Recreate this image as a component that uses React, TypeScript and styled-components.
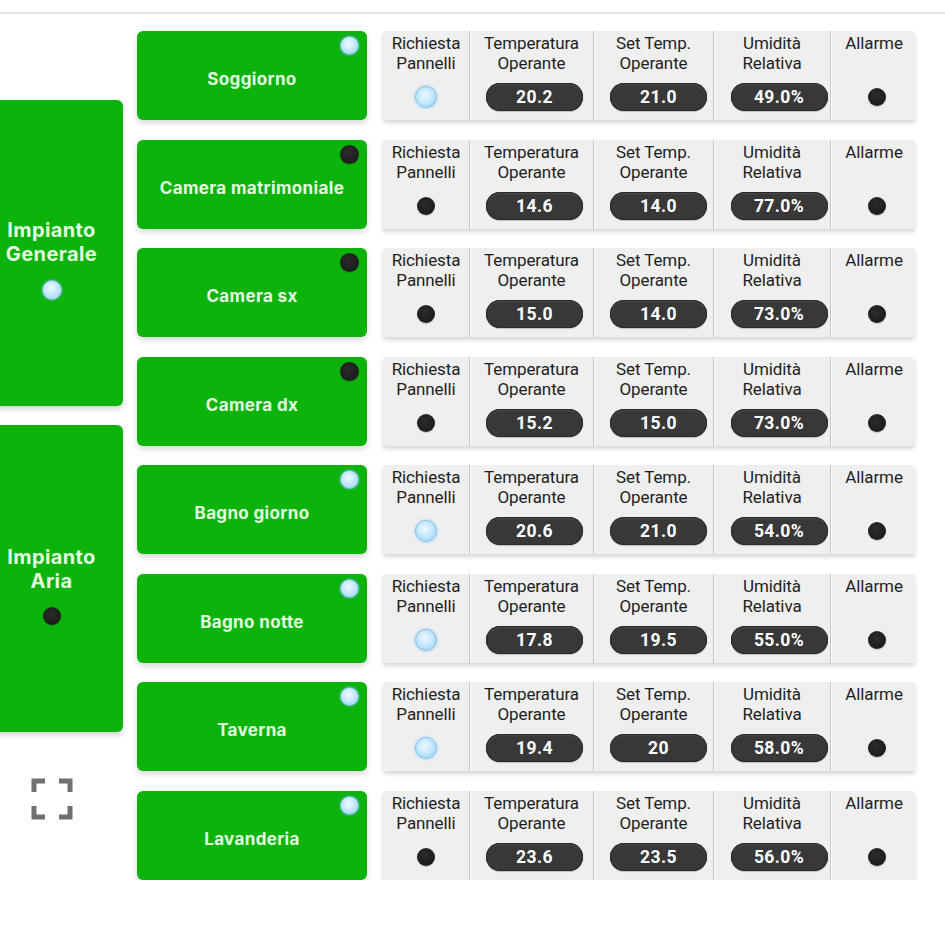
import React from "react";
import styled, { createGlobalStyle } from "styled-components";

const Global = createGlobalStyle`
  html, body { margin: 0; padding: 0; background: #ffffff; }
  body { font-family: Roboto, "Liberation Sans", sans-serif; overflow: hidden; }
`;

const TopBar = styled.div`
  height: 12px;
  border-bottom: 2px solid #e4e4e4;
`;

const Layout = styled.div`
  display: grid;
  grid-template-columns: 123px 230px 534px;
  column-gap: 14px;
  padding-top: 17px;
  & > :nth-child(3) { margin-left: 2px; }
`;

const LeftCol = styled.div`
  display: flex;
  flex-direction: column;
  align-items: stretch;
  padding-top: 69px;
  gap: 19px;
`;

const SystemPanel = styled.div<{ $h: number }>`
  height: ${(p) => p.$h}px;
  margin-left: -20px;
  background: #0bb30b;
  border-radius: 6px;
  box-shadow: 0 3px 5px rgba(0, 0, 0, 0.18);
  display: flex;
  flex-direction: column;
  align-items: center;
  justify-content: center;
  padding-top: 12px;
  box-sizing: border-box;
`;

const SystemTitle = styled.div`
  font-family: Inter, Roboto, "Liberation Sans", sans-serif;
  font-weight: 700;
  font-size: 20px;
  letter-spacing: 0.4px;
  line-height: 24px;
  color: #e4fce0;
  text-align: center;
  margin-bottom: 14px;
`;

const FullscreenWrap = styled.div`
  display: flex;
  justify-content: center;
  padding-top: 26px;
  margin-left: -20px;
  color: #707070;
`;

const RoomCol = styled.div`
  display: flex;
  flex-direction: column;
  gap: 19.5px;
`;

const RoomButton = styled.div`
  position: relative;
  height: 89px;
  background: #0bb30b;
  border-radius: 6px;
  box-shadow: 0 3px 6px rgba(0, 0, 0, 0.16);
  display: flex;
  align-items: center;
  justify-content: center;
  padding-top: 7px;
  box-sizing: border-box;
`;

const RoomName = styled.span`
  font-family: Inter, Roboto, "Liberation Sans", sans-serif;
  font-weight: 700;
  font-size: 17px;
  letter-spacing: 0.35px;
  color: #e4fce0;
`;

const CornerLed = styled.div`
  position: absolute;
  top: 5px;
  right: 8px;
`;

const DataCol = styled.div`
  display: flex;
  flex-direction: column;
  gap: 19.5px;
`;

const DataPanel = styled.div`
  height: 89px;
  display: grid;
  grid-template-columns: 87px 124px 120px 117px 86px;
  background: #efefef;
  border-radius: 3px;
  box-shadow: 0 3px 4px rgba(0, 0, 0, 0.16);
`;

const Cell = styled.div<{ $last?: boolean }>`
  display: flex;
  flex-direction: column;
  align-items: center;
  justify-content: space-between;
  padding: 2px 0 8px;
  box-sizing: border-box;
  border-right: ${(p) => (p.$last ? "none" : "1px solid #c6c6c6")};
  box-shadow: ${(p) => (p.$last ? "none" : "1px 0 0 #fbfbfb")};
`;

const Header = styled.div`
  font-family: Roboto, "Liberation Sans", sans-serif;
  font-size: 17px;
  line-height: 20px;
  color: #1e1e1e;
  text-align: center;
  white-space: pre-line;
  letter-spacing: -0.1px;
`;

const ValueRow = styled.div<{ $shift?: number }>`
  height: 30px;
  display: flex;
  align-items: center;
  justify-content: center;
  padding-left: ${(p) => p.$shift ?? 0}px;
`;

const Pill = styled.div`
  width: 97px;
  height: 28px;
  border-radius: 14px;
  background: #383838;
  box-shadow: inset 0 0 0 1px #2a2a2a, inset 0 2px 2px rgba(255, 255, 255, 0.1), 0 1px 1px rgba(0, 0, 0, 0.2);
  color: #ffffff;
  font-family: Roboto, "Liberation Sans", sans-serif;
  font-weight: 700;
  font-size: 17.5px;
  display: flex;
  align-items: center;
  justify-content: center;
  letter-spacing: 0.4px;
`;

const Led = styled.div<{ $on: boolean; $size: number }>`
  width: ${(p) => p.$size}px;
  height: ${(p) => p.$size}px;
  border-radius: 50%;
  box-sizing: border-box;
  background: ${(p) =>
    p.$on
      ? "radial-gradient(circle at 45% 40%, #eef9ff 0%, #c7e8fc 45%, #8fcdf3 100%)"
      : "radial-gradient(circle at 45% 40%, #2c2c2c 0%, #151515 100%)"};
  border: ${(p) => (p.$on ? "1.5px solid #7fc4ee" : "none")};
  box-shadow: ${(p) => (p.$on ? "0 0 3px rgba(120, 190, 240, 0.7)" : "0 1px 1px rgba(0,0,0,0.2)")};
`;

type Room = {
  name: string;
  led: boolean;
  req: boolean;
  temp: string;
  set: string;
  hum: string;
};

const rooms: Room[] = [
  { name: "Soggiorno", led: true, req: true, temp: "20.2", set: "21.0", hum: "49.0%" },
  { name: "Camera matrimoniale", led: false, req: false, temp: "14.6", set: "14.0", hum: "77.0%" },
  { name: "Camera sx", led: false, req: false, temp: "15.0", set: "14.0", hum: "73.0%" },
  { name: "Camera dx", led: false, req: false, temp: "15.2", set: "15.0", hum: "73.0%" },
  { name: "Bagno giorno", led: true, req: true, temp: "20.6", set: "21.0", hum: "54.0%" },
  { name: "Bagno notte", led: true, req: true, temp: "17.8", set: "19.5", hum: "55.0%" },
  { name: "Taverna", led: true, req: true, temp: "19.4", set: "20", hum: "58.0%" },
  { name: "Lavanderia", led: true, req: false, temp: "23.6", set: "23.5", hum: "56.0%" },
];

const FullscreenIcon = () => (
  <svg width="44" height="44" viewBox="0 0 44 44" fill="none" stroke="currentColor" strokeWidth="5" strokeLinecap="butt" strokeLinejoin="miter">
    <path d="M4 15 V4 H15" />
    <path d="M29 4 H40 V15" />
    <path d="M4 29 V40 H15" />
    <path d="M29 40 H40 V29" />
  </svg>
);

export default function App() {
  return (
    <>
      <Global />
      <TopBar />
      <Layout>
        <LeftCol>
          <SystemPanel $h={306}>
            <SystemTitle>
              Impianto
              <br />
              Generale
            </SystemTitle>
            <Led $on={true} $size={20} />
          </SystemPanel>
          <SystemPanel $h={307}>
            <SystemTitle>
              Impianto
              <br />
              Aria
            </SystemTitle>
            <Led $on={false} $size={18} />
          </SystemPanel>
          <FullscreenWrap>
            <FullscreenIcon />
          </FullscreenWrap>
        </LeftCol>
        <RoomCol>
          {rooms.map((r) => (
            <RoomButton key={r.name}>
              <CornerLed>
                <Led $on={r.led} $size={19} />
              </CornerLed>
              <RoomName>{r.name}</RoomName>
            </RoomButton>
          ))}
        </RoomCol>
        <DataCol>
          {rooms.map((r) => (
            <DataPanel key={r.name}>
              <Cell>
                <Header>{"Richiesta\nPannelli"}</Header>
                <ValueRow>
                  <Led $on={r.req} $size={r.req ? 22 : 18} />
                </ValueRow>
              </Cell>
              <Cell>
                <Header>{"Temperatura\nOperante"}</Header>
                <ValueRow $shift={6}>
                  <Pill>{r.temp}</Pill>
                </ValueRow>
              </Cell>
              <Cell>
                <Header>{"Set Temp.\nOperante"}</Header>
                <ValueRow $shift={10}>
                  <Pill>{r.set}</Pill>
                </ValueRow>
              </Cell>
              <Cell>
                <Header>{"Umidità\nRelativa"}</Header>
                <ValueRow $shift={14}>
                  <Pill>{r.hum}</Pill>
                </ValueRow>
              </Cell>
              <Cell $last>
                <Header>Allarme</Header>
                <ValueRow $shift={6}>
                  <Led $on={false} $size={18} />
                </ValueRow>
              </Cell>
            </DataPanel>
          ))}
        </DataCol>
      </Layout>
    </>
  );
}
